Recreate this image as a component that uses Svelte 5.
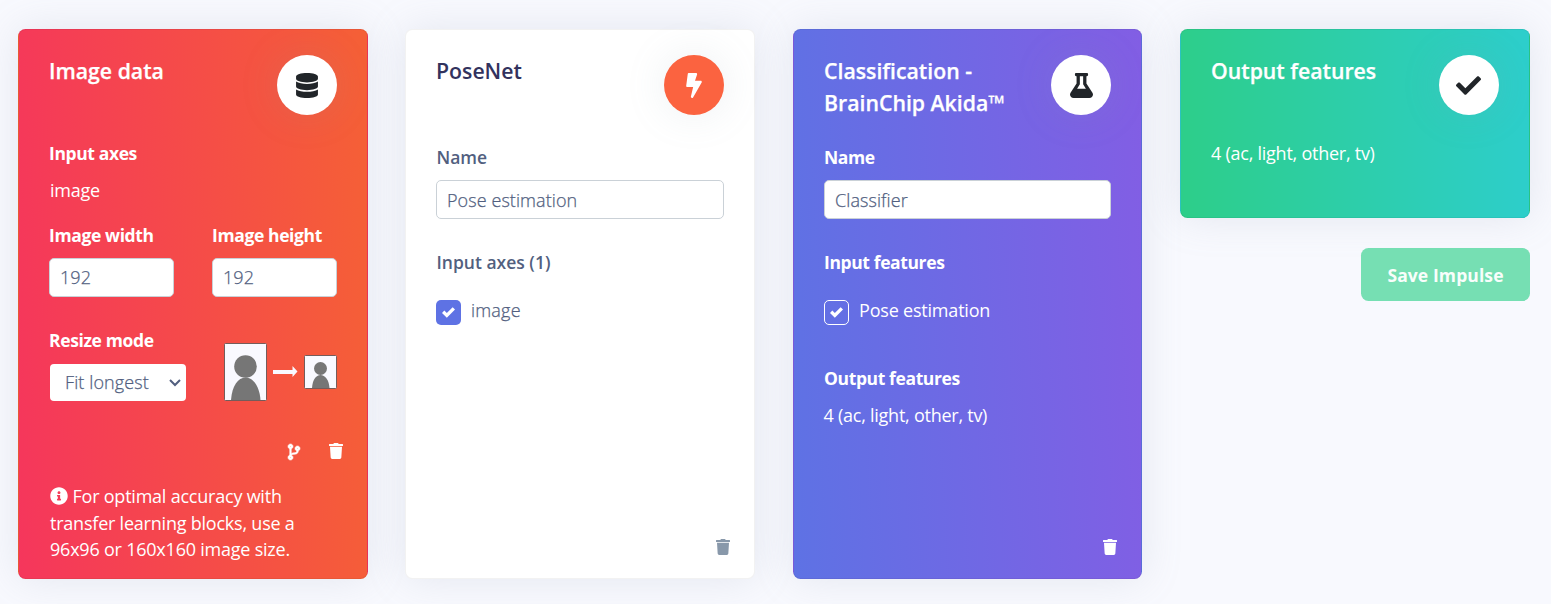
<script>
  let width = $state('192');
  let height = $state('192');
  let poseName = $state('Pose estimation');
  let classifierName = $state('Classifier');
</script>

{#snippet trash()}
  <svg class="trash" viewBox="0 0 448 512"><path fill="currentColor" d="M432 32H312l-9.4-18.700A24 24 0 0 0 281.100 0H166.800a23.720 23.720 0 0 0-21.400 13.300L136 32H16A16 16 0 0 0 0 48v32a16 16 0 0 0 16 16h416a16 16 0 0 0 16-16V48a16 16 0 0 0-16-16zM32 116L53.200 467a48 48 0 0 0 47.900 45h245.800a48 48 0 0 0 47.900-45L416 116z" /></svg>
{/snippet}

{#snippet check()}
  <svg viewBox="0 0 8 8"><path fill="#fff" d="M6.564.75l-3.590 3.612-1.538-1.550L0 4.260 2.974 7.250 8 2.193z" /></svg>
{/snippet}

{#snippet person(w, h, portrait)}
  <svg class="person" width={w} height={h} viewBox="0 0 {w} {h}">
    <rect x=".5" y=".5" width={w - 1} height={h - 1} rx="1" fill="#f9f9ff" stroke="#745c5b" />
    {#if portrait}
      <circle cx="21.500" cy="23.500" r="11.300" fill="#767676" />
      <path fill="#767676" d="M7 57C8 43 14 34.500 21.500 34.500S35.500 43 36.500 57z" />
    {:else}
      <circle cx="16.500" cy="13.500" r="6.500" fill="#767676" />
      <path fill="#767676" d="M8 33C8.500 25 12 20 16.500 20S25 25 25.500 33z" />
    {/if}
  </svg>
{/snippet}

<main>
  <section class="card danger">
    <header>
      <h2>Image data</h2>
      <span class="icon"><svg width="22" height="25" viewBox="0 0 448 512"><path fill="currentColor" d="M448 73.143v45.714C448 159.143 347.667 192 224 192S0 159.143 0 118.857V73.143C0 32.857 100.333 0 224 0s224 32.857 224 73.143zM448 176v102.857C448 319.143 347.667 352 224 352S0 319.143 0 278.857V176c48.125 33.143 136.208 48.572 224 48.572S399.874 209.143 448 176zm0 160v102.857C448 479.143 347.667 512 224 512S0 479.143 0 438.857V336c48.125 33.143 136.208 48.572 224 48.572S399.874 369.143 448 336z" /></svg></span>
    </header>
    <div class="label">Input axes</div>
    <p class="value indent">image</p>
    <div class="sizes">
      <label><span class="label">Image width</span><input bind:value={width} /></label>
      <label><span class="label">Image height</span><input bind:value={height} /></label>
    </div>
    <div class="resize">
      <div>
        <div class="label">Resize mode</div>
        <div class="select" role="combobox" aria-expanded="false" aria-controls="modes" tabindex="0">
          <span>Fit longest</span>
          <svg width="12" height="8" viewBox="0 0 12 8"><path d="M1 1l5 5 5-5" fill="none" stroke="#525f7f" stroke-width="2" /></svg>
        </div>
      </div>
      <div class="preview">
        {@render person(43, 58, true)}
        <svg width="25" height="12" viewBox="0 0 25 12"><path fill="#f9f9ff" d="M0 4h19.500V0l5 5.500-5 5.500V8H0z" /></svg>
        {@render person(33, 34, false)}
      </div>
    </div>
    <div class="actions">
      <svg class="branch" viewBox="0 0 384 512"><path fill="currentColor" stroke="currentColor" stroke-width="18" d="M384 144c0-44.200-35.800-80-80-80s-80 35.800-80 80c0 36.400 24.300 67.100 57.500 76.800-.6 16.100-4.200 28.500-11 36.900-15.400 19.200-49.300 22.400-85.200 25.700-28.200 2.600-57.400 5.400-81.300 16.900v-144c32.500-10.200 56-40.500 56-76.300 0-44.200-35.800-80-80-80S0 35.800 0 80c0 35.800 23.500 66.100 56 76.300v199.300C23.500 365.900 0 396.200 0 432c0 44.200 35.800 80 80 80s80-35.800 80-80c0-34-21.200-63.100-51.200-74.600 3.100-5.200 7.800-9.800 14.900-13.400 16.200-8.200 40.400-10.400 66.100-12.800 42.200-3.900 90-8.400 118.200-43.400 14-17.400 21.100-39.800 21.600-67.900 31.600-10.800 54.400-40.700 54.400-75.900zM80 64c8.800 0 16 7.200 16 16s-7.200 16-16 16-16-7.200-16-16 7.200-16 16-16zm0 384c-8.800 0-16-7.200-16-16s7.200-16 16-16 16 7.200 16 16-7.200 16-16 16zm224-320c8.800 0 16 7.200 16 16s-7.200 16-16 16-16-7.200-16-16 7.200-16 16-16z" /></svg>
      {@render trash()}
    </div>
    <p class="hint">
      <svg viewBox="0 0 512 512"><path fill="currentColor" d="M256 8C119.043 8 8 119.083 8 256c0 136.997 111.043 248 248 248s248-111.003 248-248C504 119.083 392.957 8 256 8zm0 110c23.196 0 42 18.804 42 42s-18.804 42-42 42-42-18.804-42-42 18.804-42 42-42zm56 254c0 6.627-5.373 12-12 12h-88c-6.627 0-12-5.373-12-12v-24c0-6.627 5.373-12 12-12h12v-64h-12c-6.627 0-12-5.373-12-12v-24c0-6.627 5.373-12 12-12h64c6.627 0 12 5.373 12 12v100h12c6.627 0 12 5.373 12 12v24z" /></svg>
      For optimal accuracy with<br />transfer learning blocks, use a<br />96x96 or 160x160 image size.
    </p>
  </section>

  <section class="card white">
    <header class="tall">
      <h2>PoseNet</h2>
      <span class="icon orange"><svg width="16" height="25" viewBox="0 0 320 512"><path fill="currentColor" d="M296 160H180.600l42.600-129.800C227.200 15 215.700 0 200 0H56C44 0 33.800 8.900 32.200 20.800l-32 240C-1.700 275.200 9.500 288 24 288h118.700L96.600 482.500c-3.600 15.200 8 29.500 23.300 29.500 8.400 0 16.400-4.400 20.800-12l176-304c9.300-15.900-2.200-36-20.700-36z" /></svg></span>
    </header>
    <label><span class="label">Name</span><input bind:value={poseName} /></label>
    <div class="label group">Input axes (1)</div>
    <div class="check"><span class="box">{@render check()}</span><span>image</span></div>
    <div class="actions bottom">{@render trash()}</div>
  </section>

  <section class="card primary">
    <header class="tall">
      <h2>Classification -<br />BrainChip Akida™</h2>
      <span class="icon"><svg width="23" height="25" viewBox="0 0 448 512" preserveAspectRatio="none"><path fill="currentColor" d="M437.200 403.500L320 215V64h8c13.300 0 24-10.700 24-24V24c0-13.300-10.700-24-24-24H120c-13.300 0-24 10.700-24 24v16c0 13.300 10.700 24 24 24h8v151L10.800 403.500C-18.500 450.600 15.300 512 70.900 512h306.200c55.700 0 89.400-61.500 60.100-108.500zM137.900 320l48.200-77.600c3.700-5.200 5.800-11.600 5.800-18.400V64h64v160c0 6.900 2.200 13.200 5.800 18.400l48.200 77.600h-172z" /></svg></span>
    </header>
    <label><span class="label">Name</span><input bind:value={classifierName} /></label>
    <div class="label group">Input features</div>
    <div class="check"><span class="box outline">{@render check()}</span><span>Pose estimation</span></div>
    <div class="label output">Output features</div>
    <p class="value">4 (ac, light, other, tv)</p>
    <div class="actions bottom">{@render trash()}</div>
  </section>

  <div class="last">
    <section class="card success">
      <header>
        <h2>Output features</h2>
        <span class="icon"><svg width="25" height="25" viewBox="0 0 512 512"><path fill="currentColor" d="M173.898 439.404l-166.400-166.400c-9.997-9.997-9.997-26.206 0-36.204l36.203-36.204c9.997-9.998 26.207-9.998 36.204 0L192 312.690 432.095 72.596c9.997-9.997 26.207-9.997 36.204 0l36.203 36.204c9.997 9.997 9.997 26.206 0 36.204l-294.400 294.401c-9.998 9.997-26.207 9.997-36.204-.001z" /></svg></span>
      </header>
      <p class="value first">4 (ac, light, other, tv)</p>
    </section>
    <button disabled>Save Impulse</button>
  </div>
</main>

<style>
  :global(body) { margin: 0; background: #f8f9fe; }
  main {
    box-sizing: border-box;
    height: 604px;
    overflow: hidden;
    padding: 29px 21px 25px 18px;
    display: grid;
    grid-template-columns: 350px 350px 349px 350px;
    column-gap: 38px;
    font: 400 18px/27px "Open Sans", sans-serif;
    color: #525f7f;
  }
  .card {
    box-sizing: border-box;
    height: 550px;
    padding: 25px 30px 0;
    display: flex;
    flex-direction: column;
    border: 1px solid rgba(0, 0, 0, 0.05);
    border-radius: 7.500px;
    box-shadow: 0 0 40px rgba(136, 152, 170, 0.18);
    background-color: #fff;
    background-clip: border-box;
  }
  .white { margin-left: -1px; width: 350px; }
  .primary { margin-left: -1px; width: 349px; }
  .danger, .primary, .success { color: #fff; }
  .danger { background-image: linear-gradient(87deg, #f5365c 0, #f56036 100%); }
  .primary { background-image: linear-gradient(87deg, #5e72e4 0, #825ee4 100%); }
  .success { background-image: linear-gradient(87deg, #2dce89 0, #2dcecc 100%); height: 189px; }
  header { display: flex; justify-content: space-between; height: 85px; flex: none; }
  header.tall { height: 89px; }
  h2 { margin: 0; font-size: 21.250px; font-weight: 600; line-height: 32px; }
  .white h2 { color: #32325d; }
  .danger h2, .primary h2, .success h2 { -webkit-text-stroke: 0.25px #fff; }
  .icon {
    width: 60px;
    height: 60px;
    flex: none;
    border-radius: 50%;
    display: flex;
    align-items: center;
    justify-content: center;
    background: #fff;
    color: #212529;
    box-shadow: 0 0 40px rgba(136, 152, 170, 0.15);
  }
  .icon.orange { background: #fb6340; color: #fff; }
  .success .icon svg { margin-right: 1px; }
  .label { display: block; font-weight: 600; font-size: 17.500px; }
  .white .label { padding-left: 0.500px; }
  .danger .label, .primary .label { font-weight: 700; letter-spacing: -0.38px; }
  p { margin: 0; }
  .value { margin-top: 10px; letter-spacing: -0.25px; }
  .primary .value { margin-left: -0.500px; }
  .value.indent { padding-left: 1px; }
  .value.first { margin-top: 0; }
  input {
    box-sizing: border-box;
    display: block;
    width: 100%;
    height: 39px;
    margin: 9px 0 0;
    padding: 0 10px;
    border: 1px solid #cad1d7;
    border-radius: 5px;
    background: #fff;
    font: 300 18px/27px "Open Sans", sans-serif;
    letter-spacing: 0.08px;
    color: #525f7f;
    -webkit-text-stroke: 0.25px #525f7f;
  }
  .sizes { display: grid; grid-template-columns: 125px 125px; column-gap: 38px; margin-top: 18px; }
  .sizes input { padding-bottom: 2px; }
  .resize { display: flex; justify-content: space-between; margin-top: 30px; }
  .select {
    box-sizing: border-box;
    width: 136px;
    height: 37px;
    margin: 10px 0 0 1px;
    padding: 0 5px 0 15px;
    display: flex;
    align-items: center;
    justify-content: space-between;
    border-radius: 4px;
    background: #fff;
    color: #525f7f;
    font-weight: 300;
    letter-spacing: 0.1px;
    -webkit-text-stroke: 0.25px #525f7f;
  }
  .preview { display: flex; align-items: center; height: 58px; margin-top: 16px; }
  .preview svg { margin-right: 6px; }
  .preview svg:last-child { margin-right: 0; }
  .person { flex: none; }
  .actions { display: flex; justify-content: flex-end; align-items: center; gap: 29px; height: 17px; margin: 41px -6px 0 0; }
  .trash { width: 14px; height: 16px; }
  .branch { width: 12px; height: 16px; overflow: visible; position: relative; top: 1px; }
  .actions.bottom { margin: auto -6px 23px 0; }
  .white .actions.bottom { color: #8898aa; }
  .hint { margin: 24px 0 0 1px; line-height: 26.600px; letter-spacing: -0.22px; white-space: nowrap; }
  .hint svg { width: 18px; height: 18px; vertical-align: -2px; }
  .group { margin-top: 30px; }
  .check { display: flex; align-items: flex-start; margin-top: 21px; gap: 10px; }
  .white .check { font-weight: 300; letter-spacing: 0.2px; -webkit-text-stroke: 0.25px #525f7f; }
  .primary .check { letter-spacing: -0.2px; }
  .box {
    box-sizing: border-box;
    width: 25px;
    height: 25px;
    margin-top: 3px;
    display: flex;
    align-items: center;
    justify-content: center;
    border-radius: 5px;
    background: #5e72e4;
  }
  .box.outline { border: 1px solid #fff; background: transparent; }
  .box svg { width: 13px; height: 13px; }
  .output { margin-top: 40px; }
  .last { display: flex; flex-direction: column; align-items: flex-end; width: 350px; margin-left: -1px; }
  .last .card { width: 350px; }
  button {
    width: 169px;
    height: 53px;
    margin-top: 30px;
    padding: 1px 0 0;
    border: 0;
    border-radius: 7.500px;
    background: #76dfb3;
    color: #f8fefb;
    font: 700 17.500px/27px "Open Sans", sans-serif;
    letter-spacing: 0.1px;
  }
</style>
